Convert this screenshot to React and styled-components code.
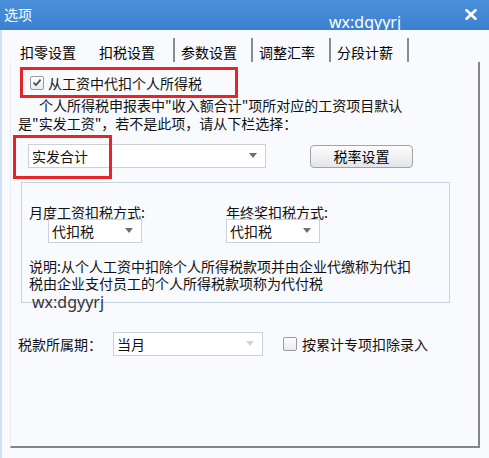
import React from "react";
import styled, { createGlobalStyle } from "styled-components";

const Global = createGlobalStyle`
  html, body {
    margin: 0;
    padding: 0;
    background: #f8fafd;
  }
  body {
    font-family: "Noto Sans CJK SC", "Noto Sans", sans-serif;
    font-size: 14px;
    color: #111;
  }
`;

const Window = styled.div`
  width: 489px;
  height: 458px;
  box-sizing: border-box;
  background: #f8fafd;
  overflow: hidden;
`;

const TitleBar = styled.div`
  position: relative;
  height: 30px;
  display: flex;
  align-items: center;
  justify-content: space-between;
  padding: 0 12px 2px 4px;
  box-sizing: border-box;
  background: linear-gradient(#4b90da, #3b80d0);
  color: #fff;
`;

const Title = styled.span`
  font-size: 14px;
  line-height: 16px;
`;

const Mark = styled.span`
  position: absolute;
  left: ${(p) => p.$x}px;
  top: ${(p) => p.$y}px;
  font-family: "Noto Sans", "DejaVu Sans", sans-serif;
  font-size: 16px;
  line-height: 20px;
  color: ${(p) => p.$color};
  pointer-events: none;
`;

const Body = styled.div`
  height: 428px;
  border-left: 2px solid #cfe0f2;
  box-sizing: border-box;
`;

const TabRow = styled.div`
  display: flex;
  padding: 8px 0 0 12px;
`;

const Tab = styled.div`
  height: 24px;
  box-sizing: border-box;
  padding: 4px ${(p) => (p.$active ? 18 : 14)}px 0 ${(p) => (p.$active ? 9 : 6)}px;
  line-height: 20px;
  color: #000;
  border-right: ${(p) => (p.$sep ? "2px solid #8c8c8c" : "none")};
  white-space: nowrap;
`;

const Panel = styled.div`
  margin-left: 8px;
  width: 470px;
  height: 386px;
  box-sizing: border-box;
  border-left: 1px solid #e9edf3;
  border-right: 2px solid #858585;
  border-bottom: 2px solid #858585;
  padding-top: 5px;
`;

const Highlight = styled.div`
  border: 3px solid #e5252a;
  box-sizing: border-box;
`;

const CheckBlock = styled(Highlight)`
  margin-left: 9px;
  width: 218px;
  height: 31px;
  display: flex;
  align-items: center;
  padding: 0 0 0 7px;
  gap: 4px;
`;

const Box = styled.span`
  width: 14px;
  height: 14px;
  box-sizing: border-box;
  border: 1px solid #9a9a9a;
  border-radius: 2px;
  background: linear-gradient(#ffffff, #e9ebee);
  display: inline-flex;
  align-items: center;
  justify-content: center;
  flex: none;
`;

const Label = styled.span`
  line-height: 18px;
  white-space: nowrap;
  margin-left: ${(p) => p.$ml || 0}px;
`;

const Para = styled.p`
  margin: -2px 0 0 7px;
  line-height: 18px;
  text-indent: 21px;
`;

const SelectRow = styled.div`
  position: relative;
  margin-top: 12px;
  display: flex;
  align-items: center;
  height: 24px;
`;

const SelectMark = styled(Highlight)`
  position: absolute;
  left: 2px;
  top: -9px;
  width: 99px;
  height: 44px;
  pointer-events: none;
`;

const Select = styled.div`
  width: ${(p) => p.$w}px;
  height: 24px;
  margin-left: ${(p) => p.$ml || 0}px;
  box-sizing: border-box;
  border: 1px solid #cdd0d4;
  background: #fff;
  display: flex;
  align-items: center;
  justify-content: space-between;
  padding: 0 8px 1px 3px;
  line-height: 18px;
  flex: none;
`;

const Arrow = styled.span`
  width: 0;
  height: 0;
  border-left: 4px solid transparent;
  border-right: 4px solid transparent;
  border-top: 5px solid ${(p) => (p.$dim ? "#d2d4d7" : "#6e6e6e")};
`;

const Button = styled.div`
  margin-left: 44px;
  width: 103px;
  height: 23px;
  box-sizing: border-box;
  border: 1px solid #a3a3a3;
  border-radius: 4px;
  background: linear-gradient(#fdfdfd, #e4e5e7);
  display: flex;
  align-items: center;
  justify-content: center;
  line-height: 18px;
  color: #000;
`;

const Group = styled.div`
  position: relative;
  margin: 14px 0 0 10px;
  width: 429px;
  height: 121px;
  box-sizing: border-box;
  border: 1px solid #c6d3e1;
  padding: 21px 0 0 7px;
`;

const Columns = styled.div`
  display: grid;
  grid-template-columns: 197px 1fr;
`;

const Field = styled.div`
  display: flex;
  flex-direction: column;
  align-items: flex-start;
`;

const FieldLabel = styled.span`
  line-height: 16px;
  margin-bottom: -1px;
  white-space: nowrap;
`;

const Note = styled.p`
  margin: 15px 0 0;
  line-height: 17px;
  width: 400px;
`;

const BottomRow = styled.div`
  margin: 29px 0 0 7px;
  display: flex;
  align-items: center;
  height: 24px;
`;

const RowLabel = styled.span`
  width: 95px;
  line-height: 18px;
  white-space: nowrap;
`;

const Spacer = styled.span`
  width: 20px;
  flex: none;
`;

const Check = ({ checked }) => (
  <Box>
    {checked && (
      <svg width="10" height="9" viewBox="0 0 10 9">
        <path d="M1.5 4.6 L4 7 L8.6 1.6" fill="none" stroke="#4a4a4a" strokeWidth="1.7" />
      </svg>
    )}
  </Box>
);

const CloseIcon = () => (
  <svg width="12" height="11" viewBox="0 0 12 11">
    <path d="M1.5 1.2 L10.5 9.8 M10.5 1.2 L1.5 9.8" stroke="#fff" strokeWidth="2.6" strokeLinecap="round" />
  </svg>
);

const tabs = [
  { name: "扣零设置" },
  { name: "扣税设置", active: true, sep: true },
  { name: "参数设置", sep: true },
  { name: "调整汇率", sep: true },
  { name: "分段计薪", sep: true },
];

export default function App() {
  return (
    <Window>
      <Global />
      <TitleBar>
        <Title>选项</Title>
        <CloseIcon />
        <Mark $x={329} $y={12} $color="#fff">wx:dgyyrj</Mark>
      </TitleBar>
      <Body>
        <TabRow>
          {tabs.map((t) => (
            <Tab key={t.name} $active={t.active} $sep={t.sep}>
              {t.name}
            </Tab>
          ))}
        </TabRow>
        <Panel>
          <CheckBlock>
            <Check checked />
            <Label>从工资中代扣个人所得税</Label>
          </CheckBlock>
          <Para>
            个人所得税申报表中"收入额合计"项所对应的工资项目默认
            <br />
            是"实发工资"，若不是此项，请从下栏选择：
          </Para>
          <SelectRow>
            <Select $w={238} $ml={17}>
              <span>实发合计</span>
              <Arrow />
            </Select>
            <Button>税率设置</Button>
            <SelectMark />
          </SelectRow>
          <Group>
            <Columns>
              <Field>
                <FieldLabel>月度工资扣税方式:</FieldLabel>
                <Select $w={94} $ml={19}>
                  <span>代扣税</span>
                  <Arrow />
                </Select>
              </Field>
              <Field>
                <FieldLabel>年终奖扣税方式:</FieldLabel>
                <Select $w={94}>
                  <span>代扣税</span>
                  <Arrow />
                </Select>
              </Field>
            </Columns>
            <Note>
              说明:从个人工资中扣除个人所得税款项并由企业代缴称为代扣
              <br />
              税由企业支付员工的个人所得税款项称为代付税
            </Note>
            <Mark $x={10} $y={109} $color="#333">wx:dgyyrj</Mark>
          </Group>
          <BottomRow>
            <RowLabel>税款所属期：</RowLabel>
            <Select $w={150}>
              <span>当月</span>
              <Arrow $dim />
            </Select>
            <Spacer />
            <Check />
            <Label $ml={5}>按累计专项扣除录入</Label>
          </BottomRow>
        </Panel>
      </Body>
    </Window>
  );
}
